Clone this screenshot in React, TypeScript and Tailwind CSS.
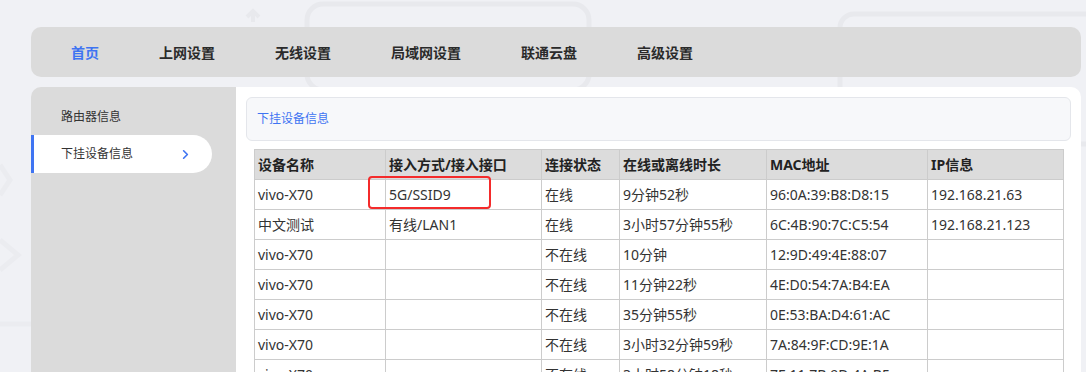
import { ChevronRight } from 'lucide-react';

const NAV_ITEMS = ['首页', '上网设置', '无线设置', '局域网设置', '联通云盘', '高级设置'];

const COLUMNS = [
  { title: '设备名称', width: 'w-[131px]' },
  { title: '接入方式/接入接口', width: 'w-[156px]' },
  { title: '连接状态', width: 'w-[78px]' },
  { title: '在线或离线时长', width: 'w-[147px]' },
  { title: 'MAC地址', width: 'w-[161px]' },
  { title: 'IP信息', width: 'w-[136px]' },
];

const DEVICES = [
  ['vivo-X70', '5G/SSID9', '在线', '9分钟52秒', '96:0A:39:B8:D8:15', '192.168.21.63'],
  ['中文测试', '有线/LAN1', '在线', '3小时57分钟55秒', '6C:4B:90:7C:C5:54', '192.168.21.123'],
  ['vivo-X70', '', '不在线', '10分钟', '12:9D:49:4E:88:07', ''],
  ['vivo-X70', '', '不在线', '11分钟22秒', '4E:D0:54:7A:B4:EA', ''],
  ['vivo-X70', '', '不在线', '35分钟55秒', '0E:53:BA:D4:61:AC', ''],
  ['vivo-X70', '', '不在线', '3小时32分钟59秒', '7A:84:9F:CD:9E:1A', ''],
  ['vivo-X70', '', '不在线', '3小时58分钟18秒', '7E:11:7B:9D:4A:B5', ''],
];

// faint line art behind the panels
const BackgroundArt = () => (
  <svg className="absolute inset-0" width="1086" height="372" fill="none" stroke="#e8e9ed" strokeWidth="5">
    <rect x="307" y="4" width="282" height="86" rx="16" />
    <rect x="840" y="14" width="270" height="130" rx="14" />
    <path d="M253 22 L253 14 M247 17 L253 11 L259 17" strokeWidth="4" />
    <path d="M0 165 L10 180 L0 195" stroke="#ebecf0" />
    <path d="M0 240 L18 255 L0 270" stroke="#ebecf0" />
    <path d="M0 324 L31 324" stroke="#ebecf0" />
  </svg>
);

const DeviceTable = () => (
  <table className="w-[809px] table-fixed border-collapse text-[14px] text-[#333]">
    <thead>
      <tr className="h-[30px] bg-[#dcdcdc]">
        {COLUMNS.map((col) => (
          <th key={col.title} className={`${col.width} border border-[#cccccc] px-[3px] text-left font-bold text-[#222]`}>
            {col.title}
          </th>
        ))}
      </tr>
    </thead>
    <tbody>
      {DEVICES.map((row, rowIndex) => (
        <tr key={rowIndex} className="h-[30px]">
          {row.map((cell, cellIndex) => (
            <td key={cellIndex} className="relative border border-[#cccccc] px-[3px] whitespace-nowrap">
              {cell}
              {rowIndex === 0 && cellIndex === 1 && (
                <span className="absolute top-[-4px] left-[-18px] h-[33px] w-[123px] rounded-[4px] border-2 border-[#f42b2b]" />
              )}
            </td>
          ))}
        </tr>
      ))}
    </tbody>
  </table>
);

export default function App() {
  return (
    <div className="relative h-[372px] w-[1086px] overflow-hidden bg-[#f0f1f5] font-['Noto_Sans','Noto_Sans_CJK_SC',sans-serif] text-[#333]">
      <BackgroundArt />
      <div className="relative flex w-[1081px] flex-col pt-[27px] pl-[31px]">
        <nav className="flex h-[50px] items-center gap-[60px] rounded-[10px] bg-[#dbdbdb] pl-[40px] text-[14px] font-bold">
          {NAV_ITEMS.map((item, index) => (
            <span key={item} className={index === 0 ? 'text-[#3f74f2]' : 'text-[#2a2a2a]'}>
              {item}
            </span>
          ))}
        </nav>
        <div className="mt-[10px] flex h-[285px]">
          <aside className="flex w-[205px] shrink-0 flex-col rounded-tl-[10px] bg-[#dbdbdb] pt-[12px] text-[12px]">
            <div className="flex h-[36px] items-center pl-[30px]">路由器信息</div>
            <div className="flex h-[38px] w-[181px] items-center justify-between rounded-r-full border-l-[3px] border-[#3f74f2] bg-white pr-[19px] pl-[27px]">
              <span>下挂设备信息</span>
              <ChevronRight className="h-[15px] w-[15px] text-[#3f74f2]" strokeWidth={2.6} />
            </div>
          </aside>
          <main className="flex min-h-0 flex-1 flex-col overflow-hidden rounded-tr-[10px] bg-white p-[10px]">
            <div className="flex h-[44px] shrink-0 items-center rounded-[6px] border border-[#e4e6eb] bg-[#f7f8fa] pl-[10px] text-[12px] text-[#3f74f2]">
              下挂设备信息
            </div>
            <div className="mt-[8px] shrink-0 px-[8px]">
              <DeviceTable />
            </div>
          </main>
        </div>
      </div>
    </div>
  );
}
